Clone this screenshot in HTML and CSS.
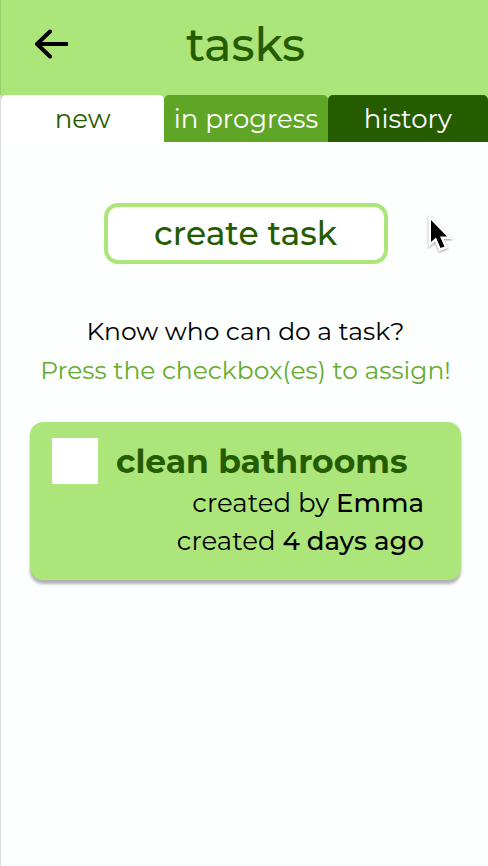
FILE: index.html
```html
<!DOCTYPE html>
<html lang="en">
<head>
<meta charset="utf-8">
<meta name="viewport" content="width=device-width, initial-scale=1">
<title>tasks</title>
<link rel="stylesheet" href="styles.css">
</head>
<body>
<div class="screen">
  <header class="header">
    <button class="back" type="button" aria-label="Back">
      <svg width="36" height="32" viewBox="0 0 36 32" fill="none" stroke="#000" stroke-width="4"><path d="M35 15H4"/><path d="M17 2.500L4 15L17 27.500" stroke-linecap="round" stroke-linejoin="round"/></svg>
    </button>
    <h1 class="title">tasks</h1>
  </header>
  <nav class="tabs">
    <button class="tab tab-new" type="button">new</button>
    <button class="tab tab-progress" type="button">in progress</button>
    <button class="tab tab-history" type="button">history</button>
  </nav>
  <main class="content">
    <button class="create" type="button">create task</button>
    <div class="hint">
      <p>Know who can do a task?</p>
      <p class="hint-action">Press the checkbox(es) to assign!</p>
    </div>
    <article class="card">
      <div class="card-head">
        <input class="check" type="checkbox" id="task-1">
        <label class="card-title" for="task-1">clean bathrooms</label>
      </div>
      <p class="meta">created by <strong>Emma</strong></p>
      <p class="meta">created <strong>4 days ago</strong></p>
    </article>
  </main>
  <svg class="cursor" width="26" height="40" viewBox="0 0 26 40" aria-hidden="true"><path d="M4 4V26L9 21.500L13.500 32L17.500 30.500L13 20.500H20Z" fill="#000" stroke="#fff" stroke-width="5" paint-order="stroke"/></svg>
</div>
</body>
</html>
```
FILE: styles.css
```css
* {
  box-sizing: border-box;
}

body {
  margin: 0;
  background: #fdfffe;
  color: #000;
  font-family: Montserrat, Inter, sans-serif;
}

button {
  padding: 0;
  border: 0;
  background: none;
  color: inherit;
  font: inherit;
  cursor: pointer;
}

p,
h1 {
  margin: 0;
}

.screen {
  position: relative;
  min-height: 100vh;
  border-left: 1px solid #dcdcdc;
}

.header {
  display: grid;
  grid-template-columns: 68px 1fr 66px;
  align-items: center;
  height: 95px;
  margin-left: -1px;
  padding-bottom: 6px;
  border-left: 1px solid #98cf6c;
  background: #ace67b;
}

.back {
  display: flex;
  justify-content: flex-end;
}

.title {
  color: #255c00;
  font-size: 46px;
  font-weight: 500;
  line-height: 56px;
  text-align: center;
}

.tabs {
  display: grid;
  grid-template-columns: 163fr 163fr 160fr;
  background: linear-gradient(#ace67b 8px, transparent 8px);
}

.tab {
  height: 47px;
  border-radius: 5px 5px 0 0;
  color: #fff;
  font-size: 26px;
  line-height: 48px;
  white-space: nowrap;
}

.tab-new {
  background: #fff;
  color: #255c00;
}

.tab-progress {
  background: #5fa526;
}

.tab-history {
  background: #255c00;
}

.content {
  display: flex;
  flex-direction: column;
  align-items: center;
  padding: 61px 27px 32px 29px;
}

.create {
  width: 284px;
  height: 61px;
  padding-bottom: 2px;
  border: 4px solid #ace67b;
  border-radius: 14px;
  background: #fff;
  color: #255c00;
  font-size: 33px;
  font-weight: 500;
  line-height: 50px;
}

.hint {
  margin: 48px -16px 0;
  font-size: 25px;
  line-height: 39px;
  text-align: center;
}

.hint-action {
  color: #66ab31;
}

.card {
  width: 100%;
  margin-top: 32px;
  padding: 16px 37px 20px 22px;
  border-radius: 13px;
  background: #ace67b;
  box-shadow: 0 4px 3px rgba(0, 0, 0, 0.3);
}

.card-head {
  display: flex;
  align-items: center;
  gap: 18px;
}

.check {
  flex: none;
  width: 46px;
  height: 46px;
  margin: 0;
  appearance: none;
  background: #fff;
}

.card-title {
  color: #255c00;
  font-size: 33px;
  font-weight: 700;
  line-height: 46px;
  white-space: nowrap;
}

.meta {
  font-size: 26px;
  line-height: 38px;
  text-align: right;
}

.meta strong {
  font-weight: 500;
}

.cursor {
  position: absolute;
  top: 216px;
  left: 426px;
  filter: drop-shadow(0 1px 1px rgba(0, 0, 0, 0.4));
}
```
